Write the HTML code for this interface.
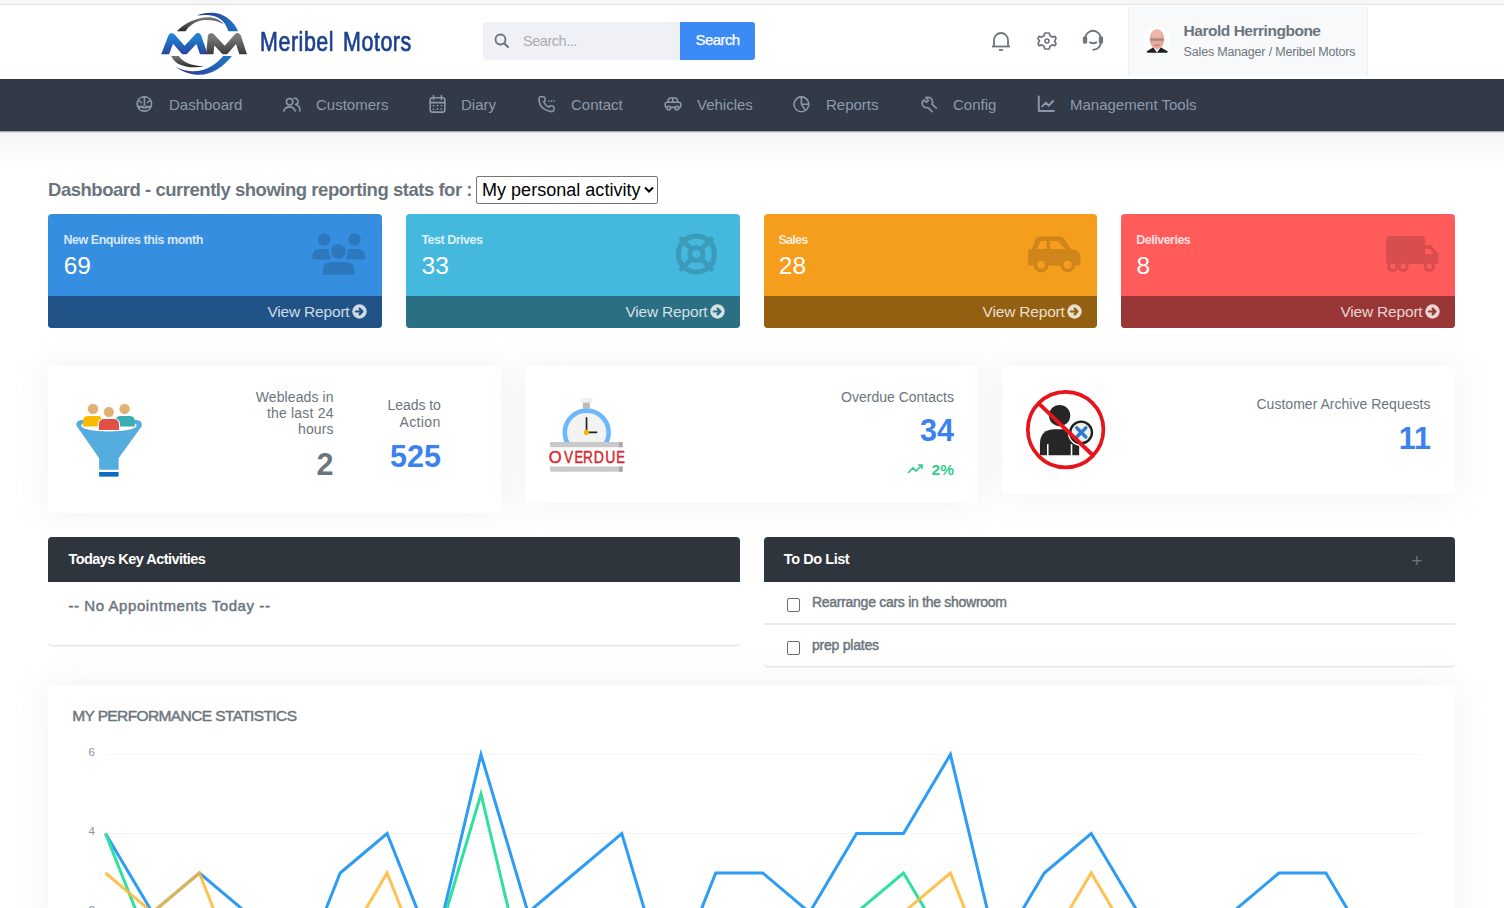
<!DOCTYPE html>
<html><head><meta charset="utf-8">
<style>
*{box-sizing:border-box;margin:0;padding:0}
html,body{width:1504px;height:908px;overflow:hidden;background:#fff;font-family:"Liberation Sans",sans-serif;position:relative}
.a{position:absolute;white-space:nowrap}
svg.a{overflow:visible}
#topband{left:0;top:0;width:1504px;height:5px;background:#f6f6f6;border-bottom:1px solid #e2e2e2}
#nav{left:0;top:79px;width:1504px;height:52px;background:#313a46;box-shadow:0 1px 1.5px rgba(30,36,44,.55)}
.nt{color:#8e9aab;font-size:15px;top:96px;line-height:17px}
.card{background:#fff;border-radius:4px;box-shadow:0 0 35px 0 rgba(154,161,171,.15)}
.tile{border-radius:4px;overflow:hidden}
.tl{font-size:12.5px;font-weight:bold;color:rgba(255,255,255,.8);line-height:14px}
.tn{font-size:22px;color:#fff;line-height:24px}
.vr{font-size:15px;color:rgba(255,255,255,.82);line-height:17px}
.lab{font-size:14px;color:#6c757d;line-height:16.5px;text-align:right}
.big{font-size:29px;font-weight:bold;line-height:30px}
.ph{background:#2f353c;border-radius:4px 4px 0 0;height:45px}
.pt{color:#fff;font-weight:bold;font-size:14px;line-height:16px}
</style></head><body>
<div class="a" id="topband"></div>

<!-- LOGO -->
<svg class="a" style="left:155px;top:8px" width="100" height="72" viewBox="0 0 1261 908">
<defs>
<linearGradient id="gb" x1="0" y1="0" x2="0" y2="1"><stop offset="0" stop-color="#1f7fd0"/><stop offset="1" stop-color="#2a3590"/></linearGradient>
<linearGradient id="gg" x1="0" y1="0" x2="0" y2="1"><stop offset="0" stop-color="#7a7a7a"/><stop offset="1" stop-color="#2a2a2a"/></linearGradient>
<linearGradient id="ga" x1="0" y1="0" x2="1" y2="0"><stop offset="0" stop-color="#2a2f85"/><stop offset="1" stop-color="#1f78c8"/></linearGradient>
<clipPath id="cm"><rect x="0" y="0" width="1261" height="582"/></clipPath>
</defs>
<path d="M275,292 C380,180 560,108 700,118 C780,128 840,170 865,205 C800,165 700,145 600,155 C500,170 430,225 385,292 Z" fill="url(#gg)"/>
<path d="M530,95 C650,40 820,45 920,130 C980,180 1030,240 1048,292 L925,292 C900,210 850,140 760,108 C680,82 600,85 530,95 Z" fill="url(#ga)"/>
<path d="M205,605 L300,605 C350,680 450,730 620,735 C520,760 380,748 290,702 C245,672 220,640 205,605 Z" fill="url(#gg)"/>
<path d="M250,730 C330,800 450,842 560,842 C720,842 860,740 970,605 L860,605 C780,700 660,792 500,797 C400,797 310,772 250,730 Z" fill="url(#ga)"/>
<g clip-path="url(#cm)">
<polyline points="105,640 212,365 372,545 540,365 622,600" fill="none" stroke="url(#gb)" stroke-width="92" stroke-linejoin="round"/>
<polyline points="690,600 712,365 880,545 1040,365 1130,640" fill="none" stroke="url(#gg)" stroke-width="92" stroke-linejoin="round"/>
</g>
</svg>
<div class="a" style="left:259.5px;top:26.8px;font-size:27.5px;color:#1c3f8f;line-height:30px;letter-spacing:.7px;word-spacing:3px;-webkit-text-stroke:.7px #1c3f8f;transform:scaleX(.78);transform-origin:0 0">Meribel Motors</div>

<!-- SEARCH -->
<div class="a" style="left:483px;top:22px;width:198px;height:38px;background:#eff1f6;border-radius:3px 0 0 3px"></div>
<svg class="a" style="left:493px;top:32px" width="18" height="18" viewBox="0 0 18 18"><circle cx="7.5" cy="7.5" r="5" fill="none" stroke="#6c757d" stroke-width="1.8"/><line x1="11.2" y1="11.2" x2="15" y2="15" stroke="#6c757d" stroke-width="2" stroke-linecap="round"/></svg>
<div class="a" style="left:523px;top:34.01px;font-size:14.5px;line-height:14.5px;color:#a9adb3;letter-spacing:-0.454px;">Search...</div>
<div class="a" style="left:680px;top:22px;width:75px;height:38px;background:#3b8af5;border-radius:0 3px 3px 0"></div>
<div class="a" style="left:695.6px;top:31.80px;font-size:15px;line-height:15px;color:#fff;letter-spacing:-0.586px;-webkit-text-stroke:.25px #fff;">Search</div>

<!-- HEADER ICONS -->
<svg class="a" style="left:990px;top:29px" width="22" height="24" viewBox="0 0 22 24">
<path d="M4,17.5 V11 A7,7 0 0 1 18,11 V17.5" fill="none" stroke="#6c757d" stroke-width="1.8"/>
<line x1="2" y1="17.5" x2="20" y2="17.5" stroke="#6c757d" stroke-width="1.8"/>
<line x1="9" y1="21" x2="13" y2="21" stroke="#6c757d" stroke-width="1.8"/>
</svg>
<svg class="a" style="left:1036px;top:30px" width="22" height="22" viewBox="0 0 22 22">
<path d="M11,3 L13.2,3 L14,5.8 L16.3,7.1 L19,6.4 L20,8.4 L18.6,11 L20,13.6 L19,15.6 L16.3,14.9 L14,16.2 L13.2,19 L8.8,19 L8,16.2 L5.7,14.9 L3,15.6 L2,13.6 L3.4,11 L2,8.4 L3,6.4 L5.7,7.1 L8,5.8 L8.8,3 Z" fill="none" stroke="#6c757d" stroke-width="1.7" stroke-linejoin="round"/>
<circle cx="11" cy="11" r="2" fill="none" stroke="#6c757d" stroke-width="1.6"/>
</svg>
<svg class="a" style="left:1082px;top:29px" width="22" height="22" viewBox="0 0 22 22">
<path d="M3.2,9.6 A7.8,7.8 0 0 1 18.8,9.6" fill="none" stroke="#6c757d" stroke-width="1.9"/>
<rect x="0.9" y="7.3" width="4.3" height="7.4" rx="1.6" fill="#6c757d"/>
<rect x="16.8" y="7.3" width="4.3" height="7.4" rx="1.6" fill="#6c757d"/>
<path d="M18.8,14 Q18.4,19.6 11.2,20.9" fill="none" stroke="#6c757d" stroke-width="1.9" stroke-linecap="round"/>
<path d="M8,13.4 Q11.2,15.2 14.4,13.4" fill="none" stroke="#6c757d" stroke-width="1.9" stroke-linecap="round"/>
</svg>

<!-- USER -->
<div class="a" style="left:1128px;top:6px;width:240px;height:70px;background:#f8f9fb;border-left:1px solid #eceff4;border-right:1px solid #eceff4"></div>
<svg class="a" style="left:1141px;top:25px" width="32" height="32" viewBox="0 0 32 32">
<circle cx="16" cy="15.5" r="14" fill="#fdfefe"/>
<path d="M5.5,26.6 L12.5,22.3 L16,26.8 L19.5,22.3 L27,26.6 L26,27.8 H6.5 Z" fill="#1c1f24"/>
<path d="M12.5,22.8 L16,27.5 L19.5,22.8 Z" fill="#f4f4f4"/>
<ellipse cx="16" cy="14.2" rx="7.3" ry="10" fill="#e7aa9b"/>
<ellipse cx="15.6" cy="9" rx="5" ry="4" fill="#f1bcad" opacity=".7"/>
<rect x="9.2" y="13.6" width="13.6" height="2.2" rx="1" fill="#8d7a74" opacity=".75"/>
<rect x="13.2" y="19.6" width="5.6" height="1.4" rx=".6" fill="#9b625c" opacity=".55"/>
</svg>
<div class="a" style="left:1183.6px;top:23.31px;font-size:15.5px;line-height:15.5px;color:#6c757d;font-weight:bold;letter-spacing:-0.479px;">Harold Herringbone</div>
<div class="a" style="left:1183.6px;top:46.21px;font-size:12.5px;line-height:12.5px;color:#6c757d;letter-spacing:-0.178px;">Sales Manager / Meribel Motors</div>

<!-- NAV -->
<div class="a" id="nav"></div>
<div class="a nt" style="left:169px">Dashboard</div>
<div class="a nt" style="left:316px">Customers</div>
<div class="a nt" style="left:461px">Diary</div>
<div class="a nt" style="left:571px">Contact</div>
<div class="a nt" style="left:697px">Vehicles</div>
<div class="a nt" style="left:826px">Reports</div>
<div class="a nt" style="left:953px">Config</div>
<div class="a nt" style="left:1070px">Management Tools</div>
<!--NAVICONS-->
<svg class="a" style="left:132px;top:92px" width="26" height="24" viewBox="0 0 26 24">
<circle cx="12.4" cy="12" r="8" fill="#8a97a9"/>
<path d="M6.2,13.7 V10.4 Q6.8,7 9,6.1 H11.6 V13.7 Z M18.6,13.7 V10.4 Q18,7 15.8,6.1 H13.2 V13.7 Z" fill="#313a46"/>
<path d="M6.9,8.3 L9.8,11 M17.9,8.3 L15,11" stroke="#8a97a9" stroke-width="1.5"/>
<path d="M8.1,16.2 Q12.4,18.8 16.7,16.2" fill="none" stroke="#313a46" stroke-width="1.7"/>
<circle cx="12.4" cy="14.4" r=".75" fill="#313a46"/>
</svg>
<svg class="a" style="left:279px;top:92px" width="26" height="24" viewBox="0 0 26 24" fill="none" stroke="#8a97a9" stroke-width="1.6" stroke-linecap="round" stroke-linejoin="round"><circle cx="10.6" cy="9.8" r="3.2"/><path d="M4.8,19 A6,6 0 0 1 16.2,19"/><path d="M14.9,6.4 A3.2,3.2 0 0 1 16.6,12.6 A6,6 0 0 1 20.9,19"/></svg>
<svg class="a" style="left:425px;top:92px" width="26" height="24" viewBox="0 0 26 24" fill="none" stroke="#8a97a9" stroke-width="1.6" stroke-linecap="round" stroke-linejoin="round"><rect x="5.2" y="5.8" width="14.6" height="14.3" rx="2.2"/><path d="M8.5,3.6 V7.4 M16.4,3.6 V7.4 M5.2,10.6 H19.8"/><g fill="#8a97a9" stroke="none"><circle cx="8.5" cy="13.7" r="0.9"/><circle cx="12.4" cy="13.7" r="0.9"/><circle cx="16.4" cy="13.7" r="0.9"/><circle cx="8.5" cy="17.2" r="0.9"/><circle cx="12.4" cy="17.2" r="0.9"/><circle cx="16.4" cy="17.2" r="0.9"/></g></svg>
<svg class="a" style="left:534px;top:92px" width="26" height="24" viewBox="0 0 26 24" fill="none" stroke="#8a97a9" stroke-width="1.6" stroke-linecap="round" stroke-linejoin="round"><path d="M6.5,4.8 H9.2 Q10.8,4.8 11,6.4 L11.2,8 Q11.3,9.2 10,9.8 L9.6,10 Q11.5,13.6 15,15.2 L15.4,14.6 Q16.2,13.6 17.4,13.8 L19,14.2 Q20.2,14.6 20,16 L19.8,18.2 Q19.6,19.6 18,19.6 Q11.5,19.2 7.5,14.8 Q5,11.8 5,6.6 Q5,4.8 6.5,4.8 Z"/><g fill="#8a97a9" stroke="none"><circle cx="15" cy="9.1" r="0.85"/><circle cx="17.4" cy="9.1" r="0.85"/><circle cx="19.8" cy="9.1" r="0.85"/></g></svg>
<svg class="a" style="left:660px;top:92px" width="26" height="24" viewBox="0 0 26 24" fill="none" stroke="#8a97a9" stroke-width="1.6" stroke-linecap="round" stroke-linejoin="round"><path d="M7.8,10.2 L8.6,7 Q8.9,6 10,6 H15.6 Q16.6,6 17,7 L18,10.2 M12.8,6.2 V10"/><path d="M7.2,15.4 H6.6 Q5.2,15.4 5.2,14 V12 Q5.2,10.2 7,10.2 H19 Q20.8,10.2 20.8,12 V14 Q20.8,15.4 19.4,15.4 H18.8 M10.6,15.4 H15"/><circle cx="8.8" cy="16" r="1.8"/><circle cx="16.9" cy="16" r="1.8"/></svg>
<svg class="a" style="left:789px;top:92px" width="26" height="24" viewBox="0 0 26 24" fill="none" stroke="#8a97a9" stroke-width="1.6" stroke-linecap="round" stroke-linejoin="round"><circle cx="12.4" cy="12.3" r="7.4"/><path d="M12.4,5 V12.3 H19.6 M12.4,12.3 L15.9,17.6"/></svg>
<svg class="a" style="left:916px;top:92px" width="26" height="24" viewBox="0 0 26 24" fill="none" stroke="#8a97a9" stroke-width="1.6" stroke-linecap="round" stroke-linejoin="round"><path d="M10,5.6 L12.5,8.2 L10.6,10.3 L8,7.9 Q5.6,9.6 6.4,12.8 Q7.8,16.2 11.8,15.6 L16.2,19.6"/><path d="M10,5.6 Q13.6,4.4 15.8,7.2 Q17.2,9.6 16,12.2 L20.3,16.2"/></svg>
<svg class="a" style="left:1033px;top:92px" width="26" height="24" viewBox="0 0 26 24" fill="none" stroke="#8a97a9" stroke-width="1.6" stroke-linecap="round" stroke-linejoin="round"><path d="M5.8,4.6 V19 H20.8" stroke-width="2"/><path d="M9.2,14.4 L12.9,10.6 L15.6,13.7 L20.1,9" stroke-width="2"/></svg>


<!-- shadow under nav -->
<div class="a" style="left:0;top:132.5px;width:1504px;height:38px;background:linear-gradient(#f5f6f7,#fff)"></div>

<!-- TITLE -->
<div class="a" style="left:48px;top:180.80px;font-size:18.5px;line-height:18.5px;color:#6c757d;font-weight:bold;letter-spacing:-0.473px;">Dashboard - currently showing reporting stats for :</div>
<div class="a" style="left:476px;top:176px;width:182px;height:28px;border:1px solid #767676;border-radius:2px;background:#fff"></div>
<div class="a" style="left:482px;top:180.80px;font-size:18px;line-height:18px;color:#000;letter-spacing:0.023px;">My personal activity</div>
<svg class="a" style="left:644px;top:186px" width="10" height="8" viewBox="0 0 10 8"><path d="M1,1.5 L5,5.5 L9,1.5" fill="none" stroke="#000" stroke-width="2"/></svg>

<!-- TILES -->
<div class="a tile" style="left:48px;top:214px;width:334px;height:114px;background:#368ee0"><div style="position:absolute;left:0;top:82px;width:100%;height:32px;background:#215388"></div></div>
<div class="a tile" style="left:406px;top:214px;width:334px;height:114px;background:#45b8dd"><div style="position:absolute;left:0;top:82px;width:100%;height:32px;background:#2a6f83"></div></div>
<div class="a tile" style="left:764px;top:214px;width:333px;height:114px;background:#f59e1e"><div style="position:absolute;left:0;top:82px;width:100%;height:32px;background:#935f11"></div></div>
<div class="a tile" style="left:1121px;top:214px;width:334px;height:114px;background:#ff5b5b"><div style="position:absolute;left:0;top:82px;width:100%;height:32px;background:#993636"></div></div>

<div class="a" style="left:63.5px;top:234.11px;font-size:12.5px;line-height:12.5px;font-weight:bold;color:rgba(255,255,255,.82);letter-spacing:-0.464px;">New Enquires this month</div>
<div class="a" style="left:63.7px;top:253.90px;font-size:24.5px;line-height:24.5px;color:#fff;">69</div>
<div class="a" style="left:421.4px;top:234.11px;font-size:12.5px;line-height:12.5px;font-weight:bold;color:rgba(255,255,255,.82);letter-spacing:-0.487px;">Test Drives</div>
<div class="a" style="left:421.6px;top:253.90px;font-size:24.5px;line-height:24.5px;color:#fff;">33</div>
<div class="a" style="left:778.5px;top:234.11px;font-size:12.5px;line-height:12.5px;font-weight:bold;color:rgba(255,255,255,.82);letter-spacing:-0.743px;">Sales</div>
<div class="a" style="left:778.8px;top:253.90px;font-size:24.5px;line-height:24.5px;color:#fff;">28</div>
<div class="a" style="left:1136.3px;top:234.11px;font-size:12.5px;line-height:12.5px;font-weight:bold;color:rgba(255,255,255,.82);letter-spacing:-0.509px;">Deliveries</div>
<div class="a" style="left:1136.5px;top:253.90px;font-size:24.5px;line-height:24.5px;color:#fff;">8</div>

<div class="a" style="left:267.4px;top:303.91px;font-size:15.5px;line-height:15.5px;color:rgba(255,255,255,.8);letter-spacing:-0.186px;">View Report</div>
<div class="a" style="left:625.4px;top:303.91px;font-size:15.5px;line-height:15.5px;color:rgba(255,255,255,.8);letter-spacing:-0.186px;">View Report</div>
<div class="a" style="left:982.6px;top:303.91px;font-size:15.5px;line-height:15.5px;color:rgba(255,255,255,.8);letter-spacing:-0.186px;">View Report</div>
<div class="a" style="left:1340.4px;top:303.91px;font-size:15.5px;line-height:15.5px;color:rgba(255,255,255,.8);letter-spacing:-0.186px;">View Report</div>
<!--TILEICONS-->
<svg class="a" style="left:352px;top:304px" width="15" height="15" viewBox="0 0 15 15"><circle cx="7.5" cy="7.5" r="7.2" fill="#fff" fill-opacity=".8"/><path d="M3.8,7.5 H10.5 M7.6,4.6 L10.5,7.5 L7.6,10.4" fill="none" stroke="#215388" stroke-width="2.2" stroke-linecap="round" stroke-linejoin="round"/></svg>
<svg class="a" style="left:710px;top:304px" width="15" height="15" viewBox="0 0 15 15"><circle cx="7.5" cy="7.5" r="7.2" fill="#fff" fill-opacity=".8"/><path d="M3.8,7.5 H10.5 M7.6,4.6 L10.5,7.5 L7.6,10.4" fill="none" stroke="#2a6f83" stroke-width="2.2" stroke-linecap="round" stroke-linejoin="round"/></svg>
<svg class="a" style="left:1067px;top:304px" width="15" height="15" viewBox="0 0 15 15"><circle cx="7.5" cy="7.5" r="7.2" fill="#fff" fill-opacity=".8"/><path d="M3.8,7.5 H10.5 M7.6,4.6 L10.5,7.5 L7.6,10.4" fill="none" stroke="#935f11" stroke-width="2.2" stroke-linecap="round" stroke-linejoin="round"/></svg>
<svg class="a" style="left:1425px;top:304px" width="15" height="15" viewBox="0 0 15 15"><circle cx="7.5" cy="7.5" r="7.2" fill="#fff" fill-opacity=".8"/><path d="M3.8,7.5 H10.5 M7.6,4.6 L10.5,7.5 L7.6,10.4" fill="none" stroke="#993636" stroke-width="2.2" stroke-linecap="round" stroke-linejoin="round"/></svg>

<svg class="a" style="left:306px;top:226px" width="66" height="54" viewBox="0 0 66 54"><defs><mask id="mk1"><rect width="66" height="54" fill="#fff"/><circle cx="32.4" cy="25.6" r="9.6" fill="#000"/></mask></defs><g opacity=".15" fill="#000"><circle cx="18.1" cy="13.4" r="6.25"/><circle cx="48.5" cy="13.4" r="6.25"/><circle cx="32.4" cy="25.6" r="7.4"/>
<g mask="url(#mk1)"><path d="M6.5,33.6 V29.5 Q6.5,22.9 14,22.9 H25 V33.6 Z"/><path d="M58.9,33.6 V29.5 Q58.9,22.9 51.4,22.9 H40.5 V33.6 Z"/></g>
<path d="M17,48.8 V44 Q17,36 25,36 H40.2 Q48.2,36 48.2,44 V48.8 Z"/></g></svg>
<svg class="a" style="left:664px;top:226px" width="66" height="54" viewBox="0 0 66 54"><g opacity=".15" fill="#000"><g fill="none" stroke="#000"><circle cx="32.4" cy="28" r="18" stroke-width="5.2"/><circle cx="32.4" cy="28" r="6.6" stroke-width="5"/>
<path d="M17.6,13.2 L27.7,23.3 M47.2,13.2 L37.1,23.3 M17.6,42.8 L27.7,32.7 M47.2,42.8 L37.1,32.7" stroke-width="5" stroke-linecap="round"/></g></g></svg>
<svg class="a" style="left:1021px;top:226px" width="66" height="54" viewBox="0 0 66 54"><defs><mask id="mk3"><rect width="66" height="54" fill="#fff"/><circle cx="20.2" cy="38.7" r="3.9" fill="#000"/><circle cx="46.7" cy="38.7" r="3.9" fill="#000"/></mask></defs><g opacity=".15" fill="#000" mask="url(#mk3)"><path fill-rule="evenodd" d="M9,39.6 Q7.1,39.6 7.1,37.6 V25 Q7.1,22.9 10.7,22.9 L14.8,12.6 Q15.6,10.4 18.5,10.4 H38.7 Q41,10.4 42.2,11.8 L50,22.9 Q59.5,23.5 59.5,32 V37.6 Q59.5,39.6 57.5,39.6 Z M16,22.9 L19.9,14.9 H25.6 V22.9 Z M29.2,14.9 H36.9 L44,22.9 H29.2 Z"/>
<circle cx="20.2" cy="38.7" r="7.6"/><circle cx="46.7" cy="38.7" r="7.6"/></g></svg>
<svg class="a" style="left:1379px;top:226px" width="66" height="54" viewBox="0 0 66 54"><defs><mask id="mk4"><rect width="66" height="54" fill="#fff"/><circle cx="13.7" cy="40.2" r="2.7" fill="#000"/><circle cx="24.1" cy="40.2" r="2.7" fill="#000"/><circle cx="50.3" cy="40.2" r="2.7" fill="#000"/></mask></defs><g opacity=".15" fill="#000" mask="url(#mk4)"><path fill-rule="evenodd" d="M11.1,10.1 H42.1 Q46.1,10.1 46.1,14.1 V19.3 H51.8 L58.9,27.4 Q59.5,28 59.5,29 V36 Q59.5,38.1 57.5,38.1 H9.1 Q7.1,38.1 7.1,36 V14.1 Q7.1,10.1 11.1,10.1 Z M46.1,22.9 H50.6 L54.8,28 H46.1 Z"/>
<circle cx="13.7" cy="40.2" r="5.65"/><circle cx="24.1" cy="40.2" r="5.65"/><circle cx="50.3" cy="40.2" r="5.65"/></g></svg>


<!-- STAT CARDS -->
<div class="a card" style="left:48px;top:366px;width:453px;height:147px"></div>
<div class="a card" style="left:525px;top:366px;width:453px;height:137px"></div>
<div class="a card" style="left:1002px;top:366px;width:453px;height:128px"></div>

<div class="a" style="left:-66.40px;width:400px;text-align:right;top:389.91px;font-size:14px;line-height:14px;color:#6c757d;letter-spacing:0.100px;">Webleads in</div><div class="a" style="left:-66.40px;width:400px;text-align:right;top:406.01px;font-size:14px;line-height:14px;color:#6c757d;letter-spacing:0.189px;">the last 24</div><div class="a" style="left:-66.40px;width:400px;text-align:right;top:422.41px;font-size:14px;line-height:14px;color:#6c757d;letter-spacing:0.117px;">hours</div>
<div class="a" style="left:-66.50px;width:400px;text-align:right;top:449.01px;font-size:30.5px;line-height:30.5px;color:#6c757d;font-weight:bold;">2</div>
<div class="a" style="left:40.70px;width:400px;text-align:right;top:398.01px;font-size:14px;line-height:14px;color:#6c757d;letter-spacing:-0.074px;">Leads to</div><div class="a" style="left:40.70px;width:400px;text-align:right;top:414.81px;font-size:14px;line-height:14px;color:#6c757d;letter-spacing:0.376px;">Action</div>
<div class="a" style="left:41.00px;width:400px;text-align:right;top:441.01px;font-size:30.5px;line-height:30.5px;color:#3b82f0;font-weight:bold;">525</div>

<div class="a" style="left:553.90px;width:400px;text-align:right;top:389.71px;font-size:14px;line-height:14px;color:#6c757d;letter-spacing:-0.003px;">Overdue Contacts</div>
<div class="a" style="left:554.00px;width:400px;text-align:right;top:415.21px;font-size:30.5px;line-height:30.5px;color:#3b82f0;font-weight:bold;">34</div>
<div class="a" style="left:554.00px;width:400px;text-align:right;top:461.81px;font-size:15.5px;line-height:15.5px;color:#2fd08a;font-weight:bold;">2%</div>
<svg class="a" style="left:907px;top:462.5px" width="17" height="12" viewBox="0 0 17 12"><path d="M1,10 L6,5 L9,8 L15,2 M11,2 L15,2 L15,6" fill="none" stroke="#2fd08a" stroke-width="1.6"/></svg>

<div class="a" style="left:1030.50px;width:400px;text-align:right;top:397.31px;font-size:14px;line-height:14px;color:#6c757d;letter-spacing:0.020px;">Customer Archive Requests</div>
<div class="a" style="left:1031.00px;width:400px;text-align:right;top:423.21px;font-size:30.5px;line-height:30.5px;color:#3b82f0;font-weight:bold;">11</div>
<!--STATICONS-->
<svg class="a" style="left:70px;top:398px" width="78" height="84" viewBox="0 0 843 908">
<path d="M70,300 Q55,250 125,238 L720,238 Q790,250 775,305 L525,650 L525,775 L315,775 L315,650 Z" fill="#55acdf"/>
<ellipse cx="420" cy="300" rx="300" ry="62" fill="#fff"/>
<defs><clipPath id="fc"><path d="M0,0 H843 V300 A300,62 0 0 1 420,362 A300,62 0 0 1 0,300 Z"/></clipPath></defs>
<g clip-path="url(#fc)">
<ellipse cx="420" cy="296" rx="292" ry="56" fill="#fff"/>
<path d="M140,308 V250 Q140,195 200,195 H300 Q345,195 345,250 V308 Z" fill="#fdbb00"/>
<path d="M495,308 V250 Q495,195 545,195 H640 Q700,195 700,250 V308 Z" fill="#3aadb5"/>
<path d="M300,345 V285 Q300,218 370,218 H470 Q540,218 540,285 V345 Z" fill="#fff"/>
<path d="M312,345 V290 Q312,228 372,228 H468 Q530,228 530,290 V345 Z" fill="#e05046"/>
</g>

<circle cx="248" cy="118" r="56" fill="#e2b173"/>
<circle cx="590" cy="118" r="56" fill="#e2b173"/>
<circle cx="420" cy="152" r="62" fill="#fff"/>
<circle cx="420" cy="152" r="55" fill="#e2b173"/>
<rect x="315" y="800" width="210" height="50" fill="#0b6bbf"/>
</svg>
<svg class="a" style="left:544px;top:394px" width="86" height="84" viewBox="0 0 930 908">
<rect x="400" y="45" width="122" height="52" rx="8" fill="#eeeeee"/>
<rect x="420" y="95" width="76" height="62" fill="#b9b9b9"/>
<path d="M221,520 A262,262 0 1 1 703,520 Z" fill="#6db8f8"/>
<path d="M277,520 A212,212 0 1 1 647,520 Z" fill="#f4f3f3"/>
<path d="M460,250 V415 H575" fill="none" stroke="#222" stroke-width="18"/>
<circle cx="460" cy="415" r="28" fill="#f5b800"/>
<rect x="65" y="520" width="787" height="55" rx="12" fill="#c9c9c9"/>
<rect x="810" y="520" width="42" height="55" rx="10" fill="#a9a9a9"/>
<text transform="translate(120.4,741) scale(1.02,1)" text-anchor="middle" font-family="Liberation Sans" font-size="176" fill="#d9262b" stroke="#d9262b" stroke-width="5">O</text><text transform="translate(265.0,741) scale(0.84,1)" text-anchor="middle" font-family="Liberation Sans" font-size="176" fill="#d9262b" stroke="#d9262b" stroke-width="5">V</text><text transform="translate(375.5,741) scale(0.8,1)" text-anchor="middle" font-family="Liberation Sans" font-size="176" fill="#d9262b" stroke="#d9262b" stroke-width="5">E</text><text transform="translate(476.0,741) scale(0.84,1)" text-anchor="middle" font-family="Liberation Sans" font-size="176" fill="#d9262b" stroke="#d9262b" stroke-width="5">R</text><text transform="translate(592.0,741) scale(0.86,1)" text-anchor="middle" font-family="Liberation Sans" font-size="176" fill="#d9262b" stroke="#d9262b" stroke-width="5">D</text><text transform="translate(717.0,741) scale(0.86,1)" text-anchor="middle" font-family="Liberation Sans" font-size="176" fill="#d9262b" stroke="#d9262b" stroke-width="5">U</text><text transform="translate(827.5,741) scale(0.8,1)" text-anchor="middle" font-family="Liberation Sans" font-size="176" fill="#d9262b" stroke="#d9262b" stroke-width="5">E</text>
<rect x="65" y="785" width="787" height="55" rx="12" fill="#c9c9c9"/>
<rect x="810" y="785" width="42" height="55" rx="10" fill="#a9a9a9"/>
</svg>
<svg class="a" style="left:1022px;top:386px" width="88" height="88" viewBox="0 0 908 908">
<circle cx="388" cy="305" r="110" fill="#262626"/>
<path d="M185,715 V600 Q185,445 340,445 H435 Q590,445 590,600 V715 Z" fill="#262626"/>
<rect x="258" y="600" width="16" height="120" fill="#fff"/>
<rect x="503" y="600" width="16" height="120" fill="#fff"/>
<circle cx="610" cy="480" r="138" fill="#fff"/>
<circle cx="610" cy="480" r="112" fill="#efefef" stroke="#1e1e1e" stroke-width="24"/>
<path d="M565,432 L658,527 M658,432 L565,527" stroke="#2f7bd0" stroke-width="36" stroke-linecap="round"/>
<circle cx="450" cy="450" r="390" fill="none" stroke="#e8141c" stroke-width="38"/>
<line x1="180" y1="188" x2="728" y2="712" stroke="#e8141c" stroke-width="40"/>
</svg>


<!-- PANELS -->
<div class="a" style="left:48px;top:537px;width:692px;height:108px;background:#fff;border-radius:4px;box-shadow:0 1.5px 0 #e6e8eb"></div>
<div class="a ph" style="left:48px;top:537px;width:692px"></div>
<div class="a" style="left:68.4px;top:551.90px;font-size:14.5px;line-height:14.5px;color:#fff;font-weight:bold;letter-spacing:-0.544px;">Todays Key Activities</div>
<div class="a" style="left:68.4px;top:597.71px;font-size:15px;line-height:15px;color:#6c757d;letter-spacing:0.578px;-webkit-text-stroke:.45px currentColor;">-- No Appointments Today --</div>

<div class="a" style="left:764px;top:537px;width:691px;height:129px;background:#fff;border-radius:4px;box-shadow:0 1.5px 0 #e6e8eb"></div>
<div class="a ph" style="left:764px;top:537px;width:691px"></div>
<div class="a" style="left:783.8px;top:551.71px;font-size:14.5px;line-height:14.5px;color:#fff;font-weight:bold;letter-spacing:-0.435px;">To Do List</div>
<div class="a" style="left:1411.2px;top:551.8px;font-size:19px;color:#6c757d;line-height:18px">+</div>
<div class="a" style="left:786.5px;top:598px;width:13.5px;height:13.5px;border:1px solid #6b6b6b;border-radius:2px;background:#fff"></div>
<div class="a" style="left:812px;top:595.10px;font-size:14px;line-height:14px;color:#6c757d;letter-spacing:-0.280px;-webkit-text-stroke:.45px currentColor;">Rearrange cars in the showroom</div>
<div class="a" style="left:764px;top:623px;width:691px;height:2px;background:#e8eaed"></div>
<div class="a" style="left:786.5px;top:641px;width:13.5px;height:13.5px;border:1px solid #6b6b6b;border-radius:2px;background:#fff"></div>
<div class="a" style="left:812px;top:637.81px;font-size:14px;line-height:14px;color:#6c757d;letter-spacing:-0.228px;-webkit-text-stroke:.45px currentColor;">prep plates</div>

<!-- CHART CARD -->
<div class="a card" style="left:48px;top:685px;width:1407px;height:260px"></div>
<div class="a" style="left:72.2px;top:708.31px;font-size:15.5px;line-height:15.5px;color:#6c757d;letter-spacing:-0.609px;-webkit-text-stroke:.45px currentColor;">MY PERFORMANCE STATISTICS</div>
<!--CHART-->
<svg class="a" style="left:0;top:0" width="1504" height="908" viewBox="0 0 1504 908">
<line x1="105" y1="754.5" x2="1421" y2="754.5" stroke="#f4f5f8" stroke-width="1"/>
<line x1="105" y1="833.5" x2="1421" y2="833.5" stroke="#f4f5f8" stroke-width="1"/>
<line x1="105" y1="912.5" x2="1421" y2="912.5" stroke="#f4f5f8" stroke-width="1"/>
<text x="95" y="755.5" text-anchor="end" font-family="Liberation Sans" font-size="11.5" fill="#8a939c">6</text>
<text x="95" y="834.5" text-anchor="end" font-family="Liberation Sans" font-size="11.5" fill="#8a939c">4</text>
<text x="95" y="913.5" text-anchor="end" font-family="Liberation Sans" font-size="11.5" fill="#8a939c">2</text>
<polyline points="105.5,833.5 152.4,912.5 199.4,873.0 246.3,912.5 293.3,991.5 340.2,873.0 387.1,833.5 434.1,952.0 481.0,754.5 528.0,912.5 574.9,873.0 621.8,833.5 668.8,991.5 715.7,873.0 762.7,873.0 809.6,912.5 856.5,833.5 903.5,833.5 950.4,754.5 997.4,952.0 1044.3,873.0 1091.2,833.5 1138.2,912.5 1185.1,952.0 1232.1,912.5 1279.0,873.0 1325.9,873.0 1372.9,952.0 1419.8,991.5" fill="none" stroke="#2d9cf4" stroke-width="3" stroke-linejoin="miter" stroke-miterlimit="10"/>
<polyline points="105.5,833.5 152.4,952.0 199.4,991.5 246.3,991.5 293.3,991.5 340.2,991.5 387.1,991.5 434.1,952.0 481.0,794.0 528.0,991.5 574.9,991.5 621.8,991.5 668.8,991.5 715.7,991.5 762.7,991.5 809.6,991.5 856.5,912.5 903.5,873.0 950.4,952.0 997.4,991.5 1044.3,991.5 1091.2,991.5 1138.2,991.5 1185.1,991.5 1232.1,991.5 1279.0,991.5 1325.9,991.5 1372.9,991.5 1419.8,991.5" fill="none" stroke="#2fe09e" stroke-width="3" stroke-linejoin="miter" stroke-miterlimit="10"/>
<polyline points="105.5,873.0 152.4,912.5 199.4,873.0 246.3,991.5 293.3,991.5 340.2,952.0 387.1,873.0 434.1,991.5 481.0,991.5 528.0,991.5 574.9,991.5 621.8,991.5 668.8,991.5 715.7,991.5 762.7,991.5 809.6,991.5 856.5,991.5 903.5,912.5 950.4,873.0 997.4,991.5 1044.3,952.0 1091.2,873.0 1138.2,952.0 1185.1,991.5 1232.1,991.5 1279.0,991.5 1325.9,991.5 1372.9,991.5 1419.8,991.5" fill="none" stroke="#ffb734" stroke-opacity=".85" stroke-width="3" stroke-linejoin="miter" stroke-miterlimit="10"/>
</svg>

</body></html>
